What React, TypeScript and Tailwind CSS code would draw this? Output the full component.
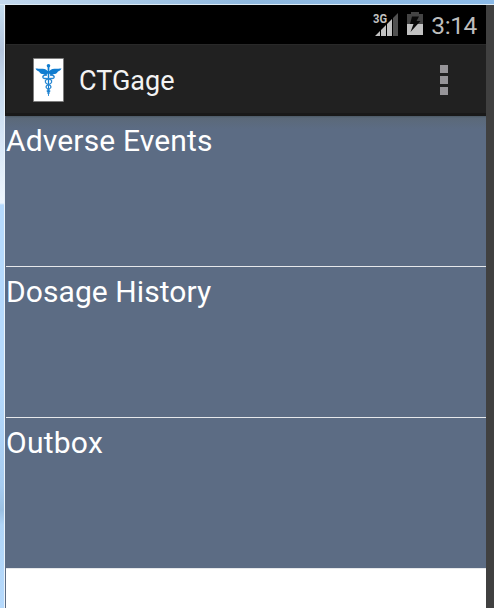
const rows = [
  { label: "Adverse Events", spacing: "tracking-[0.15px]" },
  { label: "Dosage History", spacing: "tracking-[0.08px]" },
  { label: "Outbox", spacing: "tracking-[0.25px]" },
];

function Signal() {
  return (
    <svg width="29" height="34" viewBox="-2 -5 29 34" className="shrink-0 overflow-visible">
      <text x="0" y="11" fontFamily="Roboto, sans-serif" fontSize="13.5" fontWeight="700" fill="#c2c2c2" textLength="14" lengthAdjust="spacingAndGlyphs">3G</text>
      <path d="M2 24L7 19V24Z M8 24V18L13 13V24Z M14 24V12L19 7V24Z" fill="#c2c2c2" />
      <path d="M20 24V6L25 1V24Z" fill="#515151" />
    </svg>
  );
}

function Battery() {
  return (
    <svg width="16" height="24" viewBox="0 0 16 24" className="shrink-0">
      <path d="M4 0H12V2H16V12H0V2H4Z" fill="#444" />
      <path d="M0 12H16V23H0Z" fill="#c2c2c2" />
      <path d="M5 4.5H12L9.5 9H13.5L3.5 20L6.5 12H3Z" fill="#080808" />
    </svg>
  );
}

function Caduceus() {
  return (
    <svg width="31" height="44" viewBox="0 0 31 44" className="block">
      <rect x="0.5" y="0.5" width="30" height="43" fill="#fff" stroke="#777" strokeWidth="0.7" />
      <g fill="#117dd0">
        <circle cx="15.5" cy="7.8" r="1.8" />
        <path d="M14.6 13C12 9.8 8 11 2.5 10.6C3.5 12.3 4.5 13.2 6 13.4C7 15.6 9 16 10.2 16C12 17.8 14 17 14.8 15.5H16.2C17 17 19 17.8 20.8 16C22 16 24 15.6 25 13.4C26.5 13.2 27.5 12.3 28.5 10.6C23 11 19 9.8 16.4 13Z" />
        <path d="M14.6 9H16.4L15.9 38H15.1Z" />
      </g>
      <g fill="none" stroke="#2686d1" strokeWidth="1.3">
        <path d="M14 17C8.5 17 9 20.5 12 20.5C17 20.5 19.5 22 18.5 24.5C17.3 27 13 26.5 13 29C13 31 17.2 31 16.8 33C16.3 34.5 15 34 15 36" />
        <path d="M17 17C22.5 17 22 20.5 19 20.5C14 20.5 11.5 22 12.5 24.5C13.7 27 18 26.5 18 29C18 31 13.8 31 14.2 33C14.7 34.5 16 34 16 36" />
      </g>
    </svg>
  );
}

export default function App() {
  return (
    <div className="flex h-[608px] w-[494px] flex-col overflow-hidden bg-white font-[Roboto,sans-serif]">
      <div className="h-[5px] shrink-0 border-b border-[#dcebf5] bg-linear-to-r from-[#c3d9ee] via-[#8fb9df] to-[#8bbae8]" />
      <div className="flex min-h-0 flex-1">
        <div className="w-[5px] shrink-0 border-r border-[#eaf3fb] bg-[linear-gradient(to_bottom,#c3dcef_0px,#b4c5dc_45px,#c4d8ed_80px,#d9e8f7_140px,#eef6fd_198px,#b5d9fc_200px,#b5d9fc_380px,#a6cbef_480px,#9bc0e2_505px,#b0d4f6_520px,#b5d9fc_603px)]" />
        <div className="w-px shrink-0 bg-[linear-gradient(to_bottom,#161616_111px,#5c6c84_111px)]" />
        <main className="flex w-[480px] shrink-0 flex-col">
          <div className="flex h-[39px] shrink-0 items-start justify-end bg-black pr-[9px]">
            <div className="mr-[7px] pt-[2px]"><Signal /></div>
            <div className="mr-[8px] pt-[7px]"><Battery /></div>
            <span className="pt-[6px] text-[24.5px] leading-[30px] tracking-[-0.4px] text-[#bdbdbd]">3:14</span>
          </div>
          <header className="flex h-[72px] shrink-0 items-center border-t border-b-[3px] border-t-[#292929] border-b-[#191919] bg-[#212121] pt-[2px] pl-[27px] pr-[38px]">
            <Caduceus />
            <h1 className="ml-[15px] flex-1 pt-[2px] text-[27px] leading-8 text-[#f3f3f3]">CTGage</h1>
            <div className="flex flex-col gap-[3px]">
              <i className="size-2 bg-[#979599]" />
              <i className="size-2 bg-[#979599]" />
              <i className="size-2 bg-[#979599]" />
            </div>
          </header>
          <div className="bg-[linear-gradient(to_bottom,#4b5864_0px,#5b6979_2px,#5c6c84_13px)]">
            {rows.map((row) => (
              <section key={row.label} className="h-[151px] border-b border-[#e6e8eb] pt-[7px]">
                <h2 className={`text-[30px] leading-9 whitespace-nowrap text-white ${row.spacing}`}>{row.label}</h2>
              </section>
            ))}
          </div>
        </main>
        <div className="flex-1 bg-[#404040]" />
      </div>
    </div>
  );
}
